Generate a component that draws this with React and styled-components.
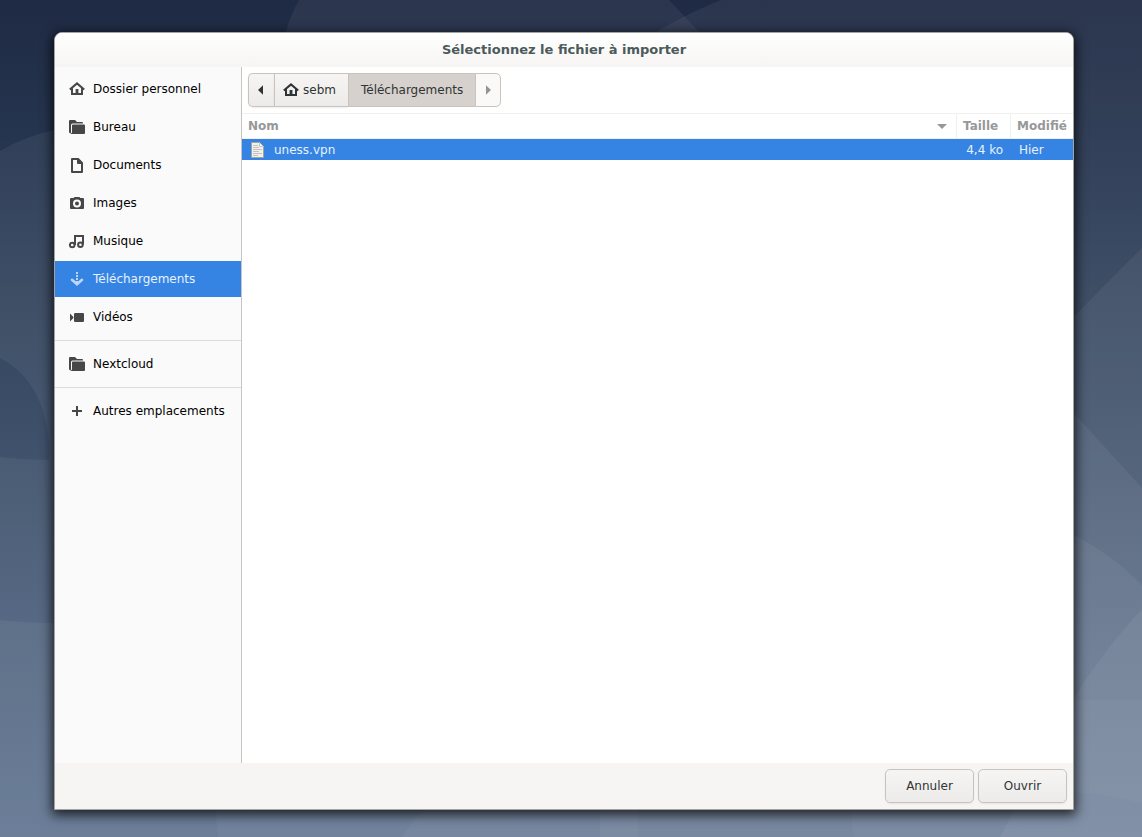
import styled, { createGlobalStyle } from "styled-components";

const places = [
  { name: "Dossier personnel", icon: "home" },
  { name: "Bureau", icon: "folder" },
  { name: "Documents", icon: "document" },
  { name: "Images", icon: "camera" },
  { name: "Musique", icon: "music" },
  { name: "Téléchargements", icon: "download", active: true },
  { name: "Vidéos", icon: "video" },
];

const Icon = ({ name }) => (
  <IconSvg viewBox="0 0 16 16" aria-hidden="true">
    {name === "home" && (
      <>
        <path d="M0.8 8.6 L8 2.4 L15.2 8.6" fill="none" stroke="currentColor" strokeWidth="2" />
        <path d="M2 8 L4 6.6 V12 H6.6 V8 H9.4 V12 H12 V6.6 L14 8 V14 H2 Z" />
      </>
    )}
    {name === "folder" && (
      <>
        <path d="M1 1 H6 L8 3 H13 Q14 3 14 4 V4.4 H3.5 Q2 4.4 2 6 V14.4 Q0 14.4 0 13 V2 Q0 1 1 1 Z" />
        <path d="M4 5.4 H15 Q16 5.4 16 6.4 V14 Q16 15 15 15 H1.6 L3 13.6 V6.4 Q3 5.4 4 5.4 Z" />
      </>
    )}
    {name === "document" && (
      <path
        fillRule="evenodd"
        d="M3 1 H9.6 L14 5.4 V15 Q14 16 13 16 H3 Q2 16 2 15 V2 Q2 1 3 1 Z M4 3 V14 H12 V7 H9 Q8 7 8 6 V3 Z"
      />
    )}
    {name === "camera" && (
      <path
        fillRule="evenodd"
        d="M5.6 2 H10.4 L11.4 3 H14 Q15 3 15 4 V13 Q15 14 14 14 H2 Q1 14 1 13 V4 Q1 3 2 3 H4.6 Z M8 4.6 A4 4 0 1 0 8 12.6 A4 4 0 1 0 8 4.6 Z M8 6.6 A2 2 0 1 1 8 10.6 A2 2 0 1 1 8 6.6 Z"
      />
    )}
    {name === "music" && (
      <g fill="none" stroke="currentColor" strokeWidth="2">
        <path d="M6 12 V3 H14 V11.5" />
        <circle cx="3.2" cy="12" r="2.3" />
        <circle cx="11.4" cy="11.8" r="2.3" />
      </g>
    )}
    {name === "download" && (
      <>
        <path d="M7 1 H9 V3 H7 Z M7 4 H9 V6 H7 Z M7 7 H9 V9 H7 Z M7 10 H9 V12 H7 Z" />
        <path
          d="M3 8.8 L8 13.2 L13 8.8"
          fill="none"
          stroke="currentColor"
          strokeWidth="2.6"
          strokeLinecap="round"
        />
      </>
    )}
    {name === "video" && (
      <path d="M1 4.6 L4.4 8 V9 L1 12.4 Z M6.4 4 H14 Q15 4 15 5 V12 Q15 13 14 13 H6.4 Q5 13 5 12 V5 Q5 4 6.4 4 Z" />
    )}
    {name === "plus" && <path d="M7 3 H9 V7 H13 V9 H9 V13 H7 V9 H3 V7 H7 Z" />}
    {name === "left" && <path d="M9 3.2 V12.8 L4 8 Z" />}
    {name === "right" && <path d="M6 3.2 V12.8 L11 8 Z" />}
    {name === "sort" && <path d="M3 6 H13 L8 11 Z" />}
  </IconSvg>
);

const FileIcon = () => (
  <IconSvg viewBox="0 0 16 16" aria-hidden="true">
    <path d="M1.5 0.5 H9.5 L13.5 4.5 V15.5 H1.5 Z" fill="#f1f1ef" stroke="#a3a39e" />
    <path d="M9.5 0.5 V4.5 H13.5 Z" fill="#fff" stroke="#c4c4bf" />
    <path
      d="M3 3.5 H8 M3 5.5 H9 M3 7.5 H12 M3 9.5 H9 M3 11.5 H12 M3 13.5 H8"
      stroke="#c2c2be"
      fill="none"
    />
  </IconSvg>
);

const Wallpaper = () => (
  <WallpaperSvg viewBox="0 0 1142 837" preserveAspectRatio="none" aria-hidden="true">
    <defs>
      <linearGradient id="sky" x1="0" y1="0" x2="0" y2="1">
        <stop offset="0" stopColor="#1f2a44" />
        <stop offset="0.15" stopColor="#25344e" />
        <stop offset="0.35" stopColor="#33445d" />
        <stop offset="0.55" stopColor="#40526c" />
        <stop offset="0.74" stopColor="#4d607c" />
        <stop offset="1" stopColor="#5b708d" />
      </linearGradient>
    </defs>
    <rect width="1142" height="837" fill="url(#sky)" />
    <g fill="#ffffff" fillOpacity="0.055">
      <path d="M0 151 Q26 136 54 130 H90 V460 H49 C51 410 32 374 0 358 Z" />
      <path d="M0 457 Q25 460 60 460 H600 V837 H0 Z" />
      <path d="M0 620 Q25 623 60 623 H600 V837 H0 Z" />
      <path d="M299 0 Q290 16 285 34 H701 L669 0 Z" />
      <path d="M721 0 H1142 V837 H600 V70 Q660 24 721 0 Z" />
      <path d="M1142 248 Q1108 281 1070 321 L600 600 V837 H1142 Z" />
      <path d="M600 518 H1142 V837 H600 Z" />
      <path d="M1070 409 L1142 488 V518 H1070 Z" />
      <path d="M1070 533 Q1112 554 1142 585 V837 H600 V760 Z" />
      <path d="M1142 609 Q1105 648 1070 704 L1000 837 H1142 Z" />
      <path d="M1070 700 H1142 V803 Q1110 794 1070 792 Z" fillOpacity="0.03" />
      <path d="M214 800 L218 837 H600 V800 Z" fillOpacity="0.04" />
      <path d="M432 800 Q415 818 402 837 H600 V800 Z" fillOpacity="0.04" />
      <path d="M638 800 V837 H853 L850 800 Z" fill="#22324d" fillOpacity="0.03" />
    </g>
  </WallpaperSvg>
);

const App = () => {
  return (
    <Desktop>
      <GlobalStyle />
      <Wallpaper />
      <Dialog role="dialog" aria-labelledby="dialog-title">
        <TitleBar>
          <Title id="dialog-title">Sélectionnez le fichier à importer</Title>
        </TitleBar>
        <Body>
          <Sidebar>
            {places.map((place) => (
              <Place key={place.name} $active={place.active}>
                <Icon name={place.icon} />
                {place.name}
              </Place>
            ))}
            <Separator />
            <Place>
              <Icon name="folder" />
              Nextcloud
            </Place>
            <Separator />
            <Place>
              <Icon name="plus" />
              Autres emplacements
            </Place>
          </Sidebar>
          <Browser>
            <PathBar>
              <PathButton $arrow aria-label="Précédent">
                <Icon name="left" />
              </PathButton>
              <PathButton>
                <Icon name="home" />
                sebm
              </PathButton>
              <PathButton $current>Téléchargements</PathButton>
              <PathButton $arrow disabled aria-label="Suivant">
                <Icon name="right" />
              </PathButton>
            </PathBar>
            <FileTable>
              <colgroup>
                <col />
                <SizeCol />
                <DateCol />
              </colgroup>
              <thead>
                <tr>
                  <HeadCell scope="col" aria-sort="ascending">
                    <HeadLabel>
                      Nom
                      <Icon name="sort" />
                    </HeadLabel>
                  </HeadCell>
                  <HeadCell scope="col">Taille</HeadCell>
                  <HeadCell scope="col">Modifié</HeadCell>
                </tr>
              </thead>
              <tbody>
                <FileRow>
                  <Cell>
                    <FileName>
                      <FileIcon />
                      uness.vpn
                    </FileName>
                  </Cell>
                  <Cell $right>4,4 ko</Cell>
                  <Cell>Hier</Cell>
                </FileRow>
              </tbody>
            </FileTable>
          </Browser>
        </Body>
        <Actions>
          <ActionButton>Annuler</ActionButton>
          <ActionButton>Ouvrir</ActionButton>
        </Actions>
      </Dialog>
    </Desktop>
  );
};

const GlobalStyle = createGlobalStyle`
  * {
    box-sizing: border-box;
  }

  body {
    margin: 0;
    font-family: "DejaVu Sans", sans-serif;
    font-size: 12px;
    color: #000;
  }

  button {
    font: inherit;
    color: inherit;
  }
`;

/* Wallpaper and dialog share the single grid cell */
const Desktop = styled.main`
  display: grid;
  grid-template: minmax(100vh, auto) / minmax(0, 1fr);
  overflow: hidden;

  > * {
    grid-area: 1 / 1;
  }
`;

const WallpaperSvg = styled.svg`
  display: block;
  width: 100%;
  height: 100%;
  min-height: 0;
`;

const IconSvg = styled.svg`
  width: 16px;
  height: 16px;
  flex: none;
  fill: currentColor;
`;

const Dialog = styled.section`
  display: flex;
  flex-direction: column;
  margin: 32px 68px 27px 54px;
  border: 1px solid #a3a3a0;
  border-radius: 8px 8px 0 0;
  background: #fff;
  overflow: hidden;
  box-shadow: 0 3px 12px 2px rgba(0, 0, 0, 0.75);
`;

const TitleBar = styled.header`
  display: flex;
  align-items: center;
  justify-content: center;
  height: 34px;
  padding-bottom: 2px;
  background: linear-gradient(#ffffff, #f6f5f3);
`;

const Title = styled.h1`
  margin: 0;
  font-size: 13px;
  font-weight: bold;
  color: #4c5a5c;
`;

const Body = styled.div`
  display: flex;
  flex: 1;
`;

const Sidebar = styled.nav`
  display: flex;
  flex-direction: column;
  gap: 2px;
  width: 187px;
  padding-top: 4px;
  background: #fafafa;
  border-right: 1px solid #c6c5c3;
`;

const Place = styled.button`
  display: flex;
  align-items: center;
  gap: 8px;
  height: 36px;
  padding: 0 14px;
  border: 0;
  background: ${({ $active }) => ($active ? "#3584e4" : "transparent")};
  color: ${({ $active }) => ($active ? "#e8f1fc" : "#000")};
  text-align: left;
  white-space: nowrap;

  svg {
    color: ${({ $active }) => ($active ? "#bcd7f7" : "#474747")};
  }
`;

const Separator = styled.hr`
  width: 100%;
  height: 1px;
  margin: 3px 0;
  border: 0;
  background: #dcdcdb;
`;

const Browser = styled.div`
  flex: 1;
  min-width: 0;
`;

const PathBar = styled.div`
  display: flex;
  padding: 6px;
`;

const PathButton = styled.button`
  display: flex;
  align-items: center;
  justify-content: center;
  gap: 4px;
  height: 34px;
  padding: 0 12px 0 ${({ $current }) => ($current ? "12px" : "8px")};
  border: 1px solid #c9c3bd;
  border-right-width: 0;
  background: ${({ $current }) =>
    $current ? "#d6d1cc" : "linear-gradient(#f6f5f3, #edebea)"};
  color: #2e3436;

  ${({ $current }) => !$current && "box-shadow: 0 1px 2px rgba(0, 0, 0, 0.07);"}

  ${({ $arrow }) => $arrow && "width: 26px; padding: 0 4px;"}

  &:first-child {
    border-radius: 5px 0 0 5px;
  }

  &:last-child {
    border-right-width: 1px;
    border-radius: 0 5px 5px 0;
  }

  &:disabled {
    background: #faf9f8;
    color: #929595;
    box-shadow: none;
  }
`;

const FileTable = styled.table`
  width: 100%;
  table-layout: fixed;
  border-collapse: separate;
  border-spacing: 0;
`;

const SizeCol = styled.col`
  width: 54px;
`;

const DateCol = styled.col`
  width: 62px;
`;

const HeadCell = styled.th`
  height: 26px;
  padding: 0 6px;
  border-top: 1px solid #f0f0ef;
  border-bottom: 1px solid #f0f0ef;
  border-right: 1px solid #f0f0ef;
  color: #969899;
  text-align: left;
  white-space: nowrap;

  &:last-child {
    padding-right: 0;
    border-right: 0;
  }
`;

const HeadLabel = styled.div`
  display: flex;
  align-items: center;
  justify-content: space-between;
`;

const FileRow = styled.tr`
  background: #3584e4;
  color: #e8f1fc;
`;

const Cell = styled.td`
  height: 21px;
  padding: 0 8px;
  text-align: ${({ $right }) => ($right ? "right" : "left")};
  white-space: nowrap;
`;

const FileName = styled.div`
  display: flex;
  align-items: center;
  gap: 8px;
`;

const Actions = styled.footer`
  display: flex;
  justify-content: flex-end;
  gap: 4px;
  padding: 6px;
  background: #f6f5f3;
`;

const ActionButton = styled.button`
  width: 89px;
  height: 34px;
  border: 1px solid #c9c3bd;
  border-radius: 5px;
  background: linear-gradient(#f6f5f3, #edebea);
  box-shadow: 0 1px 2px rgba(0, 0, 0, 0.07);
  color: #2e3436;
`;

export default App;
